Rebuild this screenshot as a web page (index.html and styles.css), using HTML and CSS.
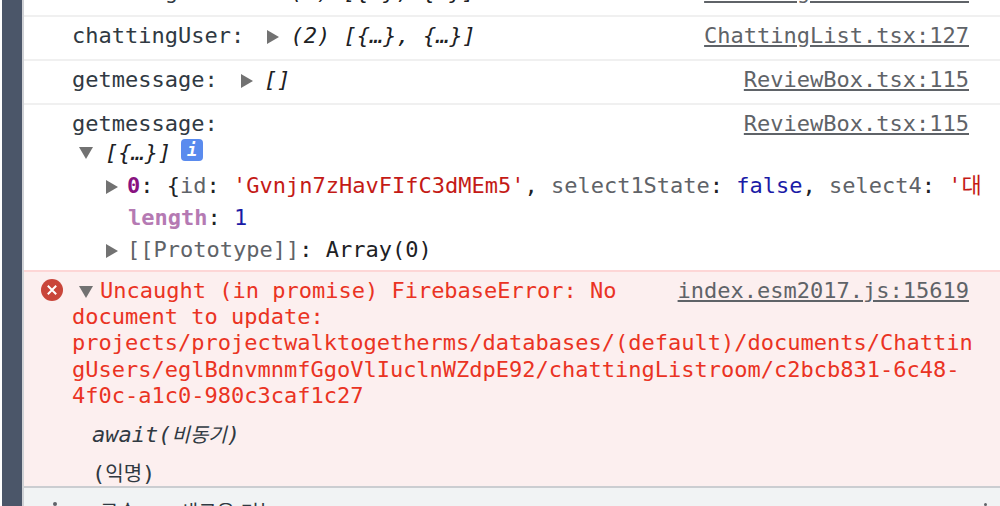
FILE: index.html
```html
<!DOCTYPE html>
<html lang="ko">
<head>
<meta charset="utf-8">
<title>Console</title>
<link rel="stylesheet" href="styles.css">
</head>
<body>
<div class="frame">
  <div class="stripe"></div>
  <div class="panel">
    <div class="log">
      <div class="row first">
        <div class="msg">chattingUser: <svg class="tri" viewBox="0 0 12 14"><path d="M0 0L12 7L0 14Z"/></svg><i>(2) [{…}, {…}]</i></div>
        <a class="src">ChattingList.tsx:127</a>
      </div>
      <div class="row">
        <div class="msg">chattingUser: <svg class="tri" viewBox="0 0 12 14"><path d="M0 0L12 7L0 14Z"/></svg><i>(2) [{…}, {…}]</i></div>
        <a class="src">ChattingList.tsx:127</a>
      </div>
      <div class="row">
        <div class="msg">getmessage: <svg class="tri" viewBox="0 0 12 14"><path d="M0 0L12 7L0 14Z"/></svg><i>[]</i></div>
        <a class="src">ReviewBox.tsx:115</a>
      </div>
      <div class="row expanded">
        <div class="head">
          <div class="msg">getmessage:</div>
          <a class="src">ReviewBox.tsx:115</a>
        </div>
        <div class="tree-top">
          <svg class="tri-down" viewBox="0 0 14 12"><path d="M0 0L14 0L7 12Z"/></svg><i>[{…}]</i><span class="info">i</span>
        </div>
        <div class="tree-line clip"><svg class="tri" viewBox="0 0 12 14"><path d="M0 0L12 7L0 14Z"/></svg><b class="idx">0</b>: {<span class="key">id</span>: <span class="str">'Gvnjn7zHavFIfC3dMEm5'</span>, <span class="key">select1State</span>: <span class="bool">false</span>, <span class="key">select4</span>: <span class="str">'대화</span></div>
        <div class="tree-line plain"><b class="len">length</b>: <span class="bool">1</span></div>
        <div class="tree-line"><svg class="tri" viewBox="0 0 12 14"><path d="M0 0L12 7L0 14Z"/></svg><span class="key">[[Prototype]]</span>: Array(0)</div>
      </div>
      <div class="error">
        <svg class="err-icon" viewBox="0 0 22 22"><circle cx="11" cy="11" r="11" fill="#c9453a"/><path d="M6.8 6.8L15.2 15.2M15.2 6.8L6.8 15.2" stroke="#fff" stroke-width="2"/></svg>
        <svg class="tri-down err-tri" viewBox="0 0 14 12"><path d="M0 0L14 0L7 12Z"/></svg>
        <a class="src err-src">index.esm2017.js:15619</a>
        <div class="err-text">Uncaught (in promise) FirebaseError: No document to update: projects/projectwalktogetherms/databases/(default)/documents/ChattingUsers/eglBdnvmnmfGgoVlIuclnWZdpE92/chattingListroom/c2bcb831-6c48-4f0c-a1c0-980c3caf1c27</div>
        <div class="stack await"><i>await(<span class="kr">비동기</span>)</i></div>
        <div class="stack anon">(<span class="kr">익명</span>)</div>
      </div>
    </div>
    <div class="drawer"><span class="dot"></span><span class="tab">콘솔</span><span class="tab">새로운 기능</span><span class="dot end"></span></div>
  </div>
</div>
</body>
</html>
```
FILE: styles.css
```css
html, body {
  margin: 0;
  height: 506px;
  overflow: hidden;
  background: #fff;
}
.frame {
  display: flex;
  height: 506px;
  padding-left: 2px;
  box-sizing: border-box;
}
.stripe {
  flex: 0 0 20px;
  background: #4b5669;
}
.panel {
  flex: 1;
  min-width: 0;
  display: flex;
  flex-direction: column;
  border-left: 2px solid #cfd1d5;
  font: 22px/26.3px "DejaVu Sans Mono", "Noto Sans CJK KR", monospace;
  color: #303942;
}
.log {
  flex: 0 0 486px;
  height: 486px;
  overflow: hidden;
}
.row {
  display: flex;
  justify-content: space-between;
  border-bottom: 2px solid #f0f0f0;
  padding: 6px 31px 0 48px;
  box-sizing: border-box;
  height: 44px;
}
.first {
  margin-top: -27px;
}
.msg {
  white-space: pre;
}
.msg i, .tree-top i {
  color: #202124;
}
.tri {
  width: 12px;
  height: 14px;
  fill: #727272;
  margin: 0 11px 0 10px;
  vertical-align: -1px;
}
.tri-down {
  width: 14px;
  height: 12px;
  fill: #727272;
}
.src {
  color: #5f6368;
  text-decoration: underline;
  white-space: pre;
}
.expanded {
  display: block;
  height: 165px;
  border-bottom: 0;
}
.head {
  display: flex;
  justify-content: space-between;
}
.tree-top {
  display: flex;
  align-items: center;
  height: 31px;
  margin: 0 0 2px 7px;
}
.tree-top i {
  margin-left: 12px;
}
.info {
  margin: -5px 0 0 10px;
  width: 22px;
  height: 22px;
  border-radius: 4px;
  background: #5a8bee;
  color: #fff;
  text-align: center;
  font: italic bold 17px/22px "DejaVu Sans Mono", monospace;
}
.tree-line {
  height: 32px;
  line-height: 32px;
  white-space: pre;
  color: #202124;
  margin-left: 34px;
  width: 875px;
  overflow: hidden;
}
.tree-line .tri {
  margin: 0 9px 0 0;
}
.plain {
  padding-left: 22px;
}
.idx {
  color: #881280;
}
.len {
  color: #b57ab3;
}
.key {
  color: #5f6368;
}
.str {
  color: #c41a16;
}
.bool {
  color: #1a1aa6;
}
.error {
  height: 216px;
  box-sizing: border-box;
  border-top: 2px solid #fdd6d6;
  background: #fcefef;
  color: #ea3323;
  padding: 6px 22px 0 48px;
  position: relative;
}
.err-icon {
  position: absolute;
  left: 17px;
  top: 7px;
  width: 22px;
  height: 22px;
}
.err-tri {
  position: absolute;
  left: 55px;
  top: 14px;
}
.err-src {
  float: right;
  margin-right: 9px;
}
.err-text {
  text-indent: 28px;
  overflow-wrap: anywhere;
  line-height: 26.2px;
}
.stack {
  color: #303942;
  margin-left: 20px;
}
.kr {
  font-size: 20px;
}
.await {
  margin-top: 13px;
}
.anon {
  margin-top: 13px;
}
.drawer {
  flex: 1;
  display: flex;
  gap: 43px;
  border-top: 2px solid #cbcdd1;
  background: #f1f3f4;
  padding: 9px 0 0 76px;
  font: 20px/30px "Noto Sans CJK KR", sans-serif;
  color: #303942;
  overflow: hidden;
  position: relative;
}
.dot {
  position: absolute;
  left: 29px;
  top: 14px;
  width: 4px;
  height: 4px;
  border-radius: 50%;
  background: #5f6368;
}
.dot.end {
  left: auto;
  right: 13px;
  width: 3px;
  height: 3px;
  top: 15px;
}
```
